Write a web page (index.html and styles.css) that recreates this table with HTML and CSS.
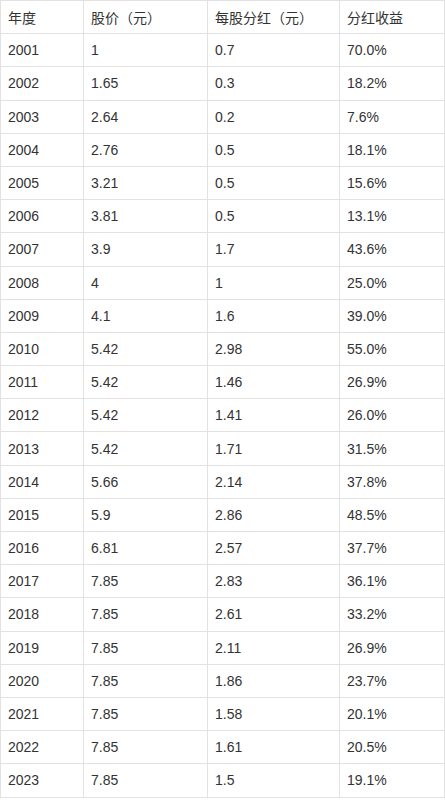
FILE: index.html
```html
<!DOCTYPE html>
<html lang="zh-CN">
<head>
  <meta charset="UTF-8">
  <meta name="viewport" content="width=device-width, initial-scale=1.0">
  <title>分红收益</title>
  <link rel="stylesheet" href="styles.css">
</head>
<body>
  <table class="dividends">
    <colgroup>
      <col class="col-year">
      <col class="col-price">
      <col class="col-div">
      <col class="col-yield">
    </colgroup>
    <thead>
      <tr><th>年度</th><th>股价（元）</th><th>每股分红（元）</th><th>分红收益</th></tr>
    </thead>
    <tbody>
      <tr><td>2001</td><td>1</td><td>0.7</td><td>70.0%</td></tr>
      <tr><td>2002</td><td>1.65</td><td>0.3</td><td>18.2%</td></tr>
      <tr><td>2003</td><td>2.64</td><td>0.2</td><td>7.6%</td></tr>
      <tr><td>2004</td><td>2.76</td><td>0.5</td><td>18.1%</td></tr>
      <tr><td>2005</td><td>3.21</td><td>0.5</td><td>15.6%</td></tr>
      <tr><td>2006</td><td>3.81</td><td>0.5</td><td>13.1%</td></tr>
      <tr><td>2007</td><td>3.9</td><td>1.7</td><td>43.6%</td></tr>
      <tr><td>2008</td><td>4</td><td>1</td><td>25.0%</td></tr>
      <tr><td>2009</td><td>4.1</td><td>1.6</td><td>39.0%</td></tr>
      <tr><td>2010</td><td>5.42</td><td>2.98</td><td>55.0%</td></tr>
      <tr><td>2011</td><td>5.42</td><td>1.46</td><td>26.9%</td></tr>
      <tr><td>2012</td><td>5.42</td><td>1.41</td><td>26.0%</td></tr>
      <tr><td>2013</td><td>5.42</td><td>1.71</td><td>31.5%</td></tr>
      <tr><td>2014</td><td>5.66</td><td>2.14</td><td>37.8%</td></tr>
      <tr><td>2015</td><td>5.9</td><td>2.86</td><td>48.5%</td></tr>
      <tr><td>2016</td><td>6.81</td><td>2.57</td><td>37.7%</td></tr>
      <tr><td>2017</td><td>7.85</td><td>2.83</td><td>36.1%</td></tr>
      <tr><td>2018</td><td>7.85</td><td>2.61</td><td>33.2%</td></tr>
      <tr><td>2019</td><td>7.85</td><td>2.11</td><td>26.9%</td></tr>
      <tr><td>2020</td><td>7.85</td><td>1.86</td><td>23.7%</td></tr>
      <tr><td>2021</td><td>7.85</td><td>1.58</td><td>20.1%</td></tr>
      <tr><td>2022</td><td>7.85</td><td>1.61</td><td>20.5%</td></tr>
      <tr><td>2023</td><td>7.85</td><td>1.5</td><td>19.1%</td></tr>
    </tbody>
  </table>
</body>
</html>
```

FILE: styles.css
```css
body {
  margin: 0;
  background-color: #fff;
  font-family: "Liberation Sans", "Noto Sans CJK SC", sans-serif;
  font-size: 14px;
  color: #333;
}

.dividends {
  border-collapse: collapse;
  table-layout: fixed;
  width: 444px;
}

.col-year { width: 83px; }
.col-price { width: 124px; }
.col-div { width: 132px; }
.col-yield { width: 105px; }

.dividends th,
.dividends td {
  border: 1px solid #e2e2e2;
  height: 33.2px;
  box-sizing: border-box;
  padding: 0 7px;
  text-align: left;
  vertical-align: middle;
  font-weight: normal;
  white-space: nowrap;
}
```
